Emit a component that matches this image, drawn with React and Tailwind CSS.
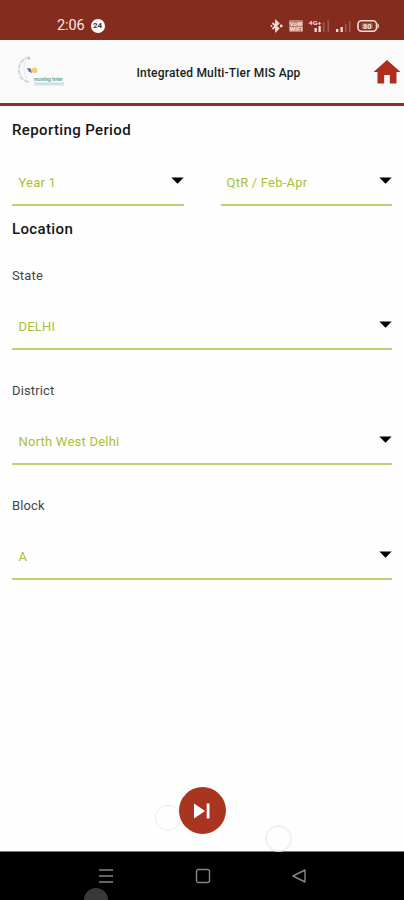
import React, { useState } from "react";

const HomeIcon = () => (
  <svg width="28" height="26" viewBox="0 0 28 26" fill="#ad2e1c">
    <path d="M14 1 L27.5 13 H23.5 V24.5 H16.8 V16 H11.2 V24.5 H4.5 V13 H0.5 Z" />
  </svg>
);

const Logo = () => (
  <svg width="54" height="36" viewBox="0 0 54 36" className="overflow-visible">
    <path d="M12.5 3 C5 5 1.5 10 2 17 C2.5 23 6 27 13 28.5" fill="none" stroke="#d3dade" strokeWidth="2.2" strokeDasharray="5 1" />
    <path d="M9 7 C6 11 6 19 10 24" fill="none" stroke="#e9ecef" strokeWidth="1.5" />
    <path d="M10 14 L14 14.5 L15 19 L11.5 17.5 Z" fill="#6f70a8" />
    <circle cx="12" cy="4.5" r="1" fill="#a9b3b9" />
    <circle cx="17.5" cy="16.3" r="2.8" fill="#f0cd7c" />
    <text x="17" y="27" fontSize="5.8" fontWeight="700" fill="#66a97b" textLength="29" lengthAdjust="spacingAndGlyphs">
      moving hrier
    </text>
    <rect x="17" y="28.4" width="30" height="3" fill="#d2dcea" />
  </svg>
);

const StatusIcons = () => (
  <svg width="112" height="16" viewBox="0 0 112 16" fill="#f3dfda">
    {/* Bluetooth */}
    <path d="M2.5 5 L8.5 10.5 L6 13 V3 L8.5 5.5 L2.5 11" fill="none" stroke="#f3dfda" strokeWidth="1.7" />
    <circle cx="1.5" cy="8" r="0.9" />
    <circle cx="11.2" cy="8" r="1.4" />
    {/* VoWiFi */}
    <rect x="19" y="2" width="14" height="12" rx="1" fillOpacity="0.45" />
    <text x="19.5" y="7.8" fontSize="6" fontWeight="800" textLength="13" lengthAdjust="spacingAndGlyphs">VoW</text>
    <text x="19.5" y="13.4" fontSize="6" fontWeight="800" textLength="13" lengthAdjust="spacingAndGlyphs">WiFi</text>
    {/* Mobile signal */}
    <text x="38.5" y="7.2" fontSize="6" fontWeight="700" textLength="13" lengthAdjust="spacingAndGlyphs">4G+</text>
    <rect x="44.5" y="10" width="2.3" height="4" />
    <rect x="48.5" y="8" width="2.3" height="6" />
    <rect x="53" y="4" width="1.5" height="10" fillOpacity="0.25" />
    <rect x="57.5" y="2.5" width="1.5" height="11.5" fillOpacity="0.25" />
    <rect x="66" y="11" width="2.3" height="3" />
    <rect x="70.5" y="9" width="2.3" height="5" />
    <rect x="75" y="6" width="1.5" height="8" fillOpacity="0.25" />
    <rect x="79" y="3" width="1.5" height="11" fillOpacity="0.25" />
    {/* Battery */}
    <rect x="88" y="2.8" width="18.5" height="10.4" rx="3.5" fill="none" stroke="#f3dfda" strokeWidth="1.6" />
    <path d="M107.5 5 Q110.5 8 107.5 11 Z" />
    <rect x="91.5" y="5" width="11.5" height="6" rx="1.5" fillOpacity="0.25" />
    <text x="93" y="10.7" fontSize="7.5" fontWeight="800" textLength="8.5" lengthAdjust="spacingAndGlyphs">80</text>
  </svg>
);

const Select = ({ value, className = "" }) => (
  <button
    type="button"
    className={`flex items-center justify-between h-[46px] border-b-2 border-[#c1cd70] text-left ${className}`}
  >
    <span className="mt-[2px] text-[13px] leading-[18px] tracking-[0.22px] text-[#a9c134]">{value}</span>
    <svg width="13" height="7" viewBox="0 0 13 7" className="mb-[3px] shrink-0">
      <path d="M0.3 0.5 H12.7 L6.5 6.7 Z" fill="#000" />
    </svg>
  </button>
);

const locations = [
  { label: "State", value: "DELHI" },
  { label: "District", value: "North West Delhi" },
  { label: "Block", value: "A" },
];

const App = () => {
  const [period] = useState({ year: "Year 1", quarter: "QtR / Feb-Apr" });

  return (
    <div className="relative flex h-[900px] w-[404px] flex-col overflow-hidden bg-[#fefefe] font-['Roboto',sans-serif]">
      {/* Status bar */}
      <div className="flex h-10 shrink-0 items-end justify-between bg-[#842d1e] pr-[22px] pb-[6px] pl-[57px]">
        <div className="flex items-center gap-[6px]">
          <span className="text-[14.5px] leading-[17px] tracking-[-0.1px] text-[#f8e8e4]">2:06</span>
          <span className="flex h-[14px] w-[14px] items-center justify-center rounded-full bg-white text-[8px] leading-none font-bold text-[#4b332e]">
            24
          </span>
        </div>
        <StatusIcons />
      </div>

      {/* App bar */}
      <div className="flex h-[66px] shrink-0 items-center justify-between border-b-3 border-[#922f22] bg-[#f9faf9] pr-[3px] pl-[17px]">
        <Logo />
        <h1 className="mt-[2px] mr-[7px] text-[12px] leading-4 font-medium tracking-[0.18px] text-[#1c1c1c]">
          Integrated Multi-Tier MIS App
        </h1>
        <HomeIcon />
      </div>

      {/* Form */}
      <div className="flex flex-1 flex-col px-3 pt-[14px]">
        <h2 className="text-[15px] leading-5 font-medium tracking-[0.37px] text-[#161616]">Reporting Period</h2>
        <div className="mt-5 flex gap-[37px]">
          <Select value={period.year} className="w-[172px] pl-[6.5px]" />
          <Select value={period.quarter} className="w-[171px] pl-[5.5px]" />
        </div>
        <h2 className="mt-[13px] text-[15px] leading-5 font-medium tracking-[0.37px] text-[#161616]">Location</h2>
        <div className="mt-7 flex flex-col gap-[32.2px]">
          {locations.map((item) => (
            <div key={item.label} className="flex flex-col">
              <label className="text-[13px] leading-[18px] tracking-[0.15px] text-[#454545]">{item.label}</label>
              <Select value={item.value} className="mt-[19px] w-full pl-[6.5px]" />
            </div>
          ))}
        </div>
        <div className="mt-auto mb-[17px] flex justify-center">
          <button type="button" className="z-10 flex h-[47px] w-[47px] items-center justify-center rounded-full bg-[#a93420]">
            <svg width="16" height="16" viewBox="0 0 16 16" fill="#fff">
              <path d="M0 0.5 L11 8 L0 15.5 Z" />
              <rect x="12.7" y="0.5" width="2.8" height="15" />
            </svg>
          </button>
        </div>
      </div>

      {/* Navigation bar */}
      <div className="flex h-[49px] shrink-0 items-center justify-between border-t border-[#777] bg-black pr-[97px] pl-[98px]">
        <svg width="16" height="16" viewBox="0 0 16 16" stroke="#858585" strokeWidth="1.7">
          <path d="M1 2 H15 M1 8 H15 M1 14 H15" />
        </svg>
        <svg width="16" height="16" viewBox="0 0 16 16" fill="none" stroke="#858585" strokeWidth="1.4">
          <rect x="1.5" y="1.5" width="13" height="13" rx="2" />
        </svg>
        <svg width="16" height="16" viewBox="0 0 16 16" fill="none" stroke="#858585" strokeWidth="1.4" strokeLinejoin="round">
          <path d="M14 2 V14 L2 8 Z" />
        </svg>
      </div>

      {/* Touch ripples */}
      <span className="absolute top-[805px] left-[155px] h-[26px] w-[26px] rounded-full border border-[#ececec]" />
      <span className="absolute top-[825px] left-[265px] h-[27px] w-[27px] rounded-full border-2 border-[#ededed]/80" />
      <span className="absolute top-[888px] left-[84px] h-6 w-6 rounded-full bg-[#393939]" />
    </div>
  );
};

export default App;
